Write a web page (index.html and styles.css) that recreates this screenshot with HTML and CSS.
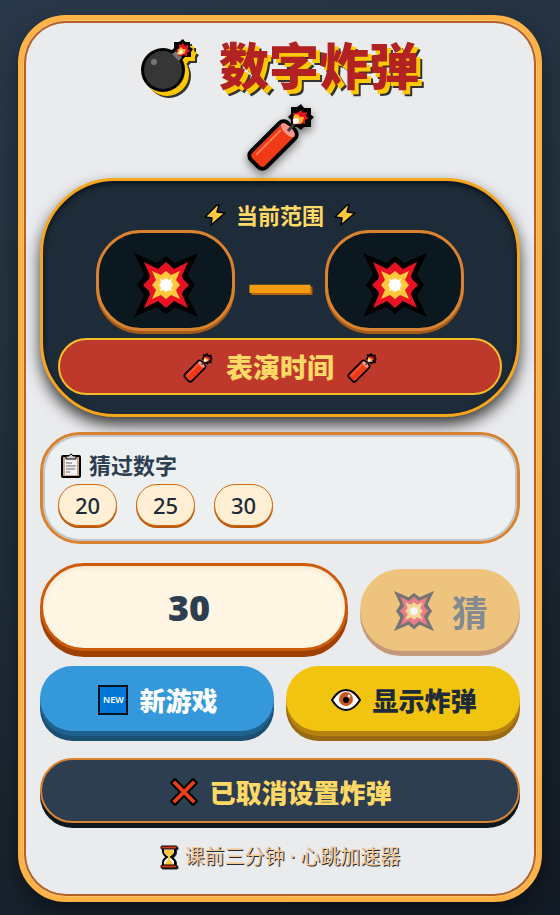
FILE: index.html
```html
<!DOCTYPE html>
<html lang="zh-CN">
<head>
    <meta charset="UTF-8">
    <meta name="viewport" content="width=device-width, initial-scale=1.0">
    <title>数字炸弹</title>
    <link rel="stylesheet" href="styles.css">
</head>
<body>
    <!-- shared icons -->
    <svg class="icon-defs" aria-hidden="true">
        <symbol id="icon-boom" viewBox="-32 -32 64 64">
            <path fill="#000" d="M-32-32L-9-22L0-29L9-22L32-32L22-11L24-7L29 0L24 7L22 11L32 32L9 22L0 29L-9 22L-32 32L-22 11L-24 7L-29 0L-24-7L-22-11Z"/>
            <path fill="#e81224" d="M-22-23L-8-16L0-23L8-16L22-23L16-9L17-6L23 0L17 6L16 9L22 23L8 16L0 23L-8 16L-22 23L-16 9L-17 6L-23 0L-17-6L-16-9Z"/>
            <path fill="#ffc83d" d="M-14-14L-5-10L0-14L5-10L14-14L10-5L14 0L10 5L14 14L5 10L0 14L-5 10L-14 14L-10 5L-14 0L-10-5Z"/>
            <path fill="#fff" d="M-6-6L-3-5L0-7L3-5L6-6L5-3L7 0L5 3L6 6L3 5L0 7L-3 5L-6 6L-5 3L-7 0L-5-3Z"/>
        </symbol>
        <symbol id="icon-dynamite" viewBox="0 0 68 68">
            <path d="M55 0l3 4h7v7l3 2l-3 3v7h-7l-3 3l-4-3h-6v-7l-3-3l3-3V3h6z"/>
            <g transform="rotate(-45 27 41)">
                <rect x="-1" y="28" width="56" height="26" rx="8"/>
                <rect x="3" y="32" width="48" height="18" rx="4" fill="#f03a17"/>
                <path d="M8 36H43" stroke="#ff7a55" stroke-width="2"/>
                <ellipse cx="48" cy="41" rx="4" ry="9" fill="#f7978b"/>
            </g>
            <path d="M42 27L50 18" stroke="#3b3b3b" stroke-width="3"/>
            <path fill="#e81224" d="M55 6l2 3l4-1l-1 4l3 2l-4 2v4l-4-1l-3 2l-2-4h-4l2-4l-1-4h4z"/>
            <path fill="#ffb02e" d="M52 10l2 3h4l-1 4l-2 3l-4-1l-4 1v-5l1-4z"/>
            <circle cx="50" cy="17" r="3" fill="#fff"/>
        </symbol>
        <symbol id="icon-bolt" viewBox="0 0 22 22">
            <path d="M13 1L1 13l7 1l-1 7L21 9l-8-1l2-7z" fill="#ffc83d" stroke="#000" stroke-width="1.5" stroke-linejoin="round"/>
        </symbol>
    </svg>

    <main class="card">
        <header class="header">
            <h1 class="title">
                <svg class="bomb" viewBox="0 0 52 54" aria-hidden="true">
                    <path d="M42 0l2 3h5v5l3 2l-2 3v5h-6l-3 3l-3-1l-8-8l3-3V3h5z"/>
                    <circle cx="22" cy="31" r="22"/>
                    <circle cx="22" cy="31" r="19" fill="#363636"/>
                    <circle cx="13" cy="23" r="3" fill="#767676"/>
                    <path d="M31 15l4-3l6 6l-3 4z" fill="#767676"/>
                    <path d="M42 4l2 3l3-1v4l2 2l-3 2v3l-4-1l-4 2l-1-5l-2-2l3-2V5l2 1z" fill="#e81224"/>
                    <path d="M40 8l2 2h3l-1 4l-4 2l-4-1l1-4z" fill="#ffb02e"/>
                    <path d="M37 15l3-5l2 4z" fill="#fff"/>
                </svg>
                <span>数字炸弹</span>
            </h1>
            <svg class="dynamite" aria-hidden="true"><use href="#icon-dynamite"/></svg>
        </header>

        <section class="range-panel">
            <h2 class="range-label">
                <svg class="icon-sm" aria-hidden="true"><use href="#icon-bolt"/></svg>
                <span>当前范围</span>
                <svg class="icon-sm" aria-hidden="true"><use href="#icon-bolt"/></svg>
            </h2>
            <div class="range">
                <div class="range-box"><svg class="boom" aria-hidden="true"><use href="#icon-boom"/></svg></div>
                <span class="dash">—</span>
                <div class="range-box"><svg class="boom" aria-hidden="true"><use href="#icon-boom"/></svg></div>
            </div>
            <div class="message">
                <svg class="icon-md" aria-hidden="true"><use href="#icon-dynamite"/></svg>
                <span>表演时间</span>
                <svg class="icon-md" aria-hidden="true"><use href="#icon-dynamite"/></svg>
            </div>
        </section>

        <section class="history">
            <h2 class="history-title">
                <svg class="clipboard" viewBox="0 0 22 25" aria-hidden="true">
                    <rect x="2" y="3" width="18" height="21" rx="1" fill="#c8a581" stroke="#000" stroke-width="2"/>
                    <rect x="5" y="5" width="12" height="17" fill="#f3f3f3"/>
                    <path d="M6 6V3h3q2-4 4 0h3v3z" fill="#d2d2d2" stroke="#000"/>
                    <path d="M6 10h6M6 13h10M6 16h9M6 19h4" stroke="#666"/>
                </svg>
                <span>猜过数字</span>
            </h2>
            <ul class="history-list">
                <li>20</li>
                <li>25</li>
                <li>30</li>
            </ul>
        </section>

        <form class="guess-row" id="guessForm">
            <input class="guess-input" id="guessInput" type="text" inputmode="numeric" value="30" aria-label="猜数字">
            <button class="guess-btn" type="submit" disabled>
                <svg class="icon-lg" aria-hidden="true"><use href="#icon-boom"/></svg>
                <span>猜</span>
            </button>
        </form>

        <div class="actions">
            <button class="btn btn-new" type="button">
                <span class="new-badge" aria-hidden="true">NEW</span>
                <span>新游戏</span>
            </button>
            <button class="btn btn-show" type="button">
                <svg class="eye" viewBox="0 0 30 22" aria-hidden="true">
                    <path d="M1 11Q7 1 15 1T29 11Q23 21 15 21T1 11z" fill="#fff" stroke="#000" stroke-width="2"/>
                    <circle cx="15" cy="10" r="7" fill="#c9561e"/>
                    <circle cx="15" cy="11" r="3" fill="#000"/>
                    <circle cx="18" cy="7" r="1.5" fill="#fff"/>
                </svg>
                <span>显示炸弹</span>
            </button>
        </div>

        <button class="btn btn-cancel" type="button">
            <svg class="cross" viewBox="0 0 28 28" aria-hidden="true">
                <path d="M5 1L14 10L23 1L27 5L18 14L27 23L23 27L14 18L5 27L1 23L10 14L1 5z" fill="#ec3f1f" stroke="#000" stroke-width="2" stroke-linejoin="round"/>
            </svg>
            <span>已取消设置炸弹</span>
        </button>

        <footer class="footer">
            <svg class="hourglass" viewBox="0 0 18 24" aria-hidden="true">
                <path d="M3 3V7Q3 9 7 12Q3 15 3 17V21H15V17Q15 15 11 12Q15 9 15 7V3z" fill="#fff" stroke="#000" stroke-width="2"/>
                <path d="M4 5H14Q14 9 10 11V15L14 20H4L8 15V11Q4 9 4 5z" fill="#ffc83d"/>
                <rect x="1" y="1" width="16" height="3" rx="1" fill="#d13b17" stroke="#000"/>
                <rect x="1" y="20" width="16" height="3" rx="1" fill="#d13b17" stroke="#000"/>
            </svg>
            <span>课前三分钟 · 心跳加速器</span>
        </footer>
    </main>

    <script>
        document.getElementById('guessForm').addEventListener('submit', (e) => {
            e.preventDefault();
        });
    </script>
</body>
</html>
```

FILE: styles.css
```css
* {
    margin: 0;
    padding: 0;
    box-sizing: border-box;
}

body {
    font-family: "Noto Sans", "Noto Sans CJK SC", sans-serif;
    background: linear-gradient(160deg, #293849 0%, #1f2d38 50%, #121a25 100%);
    min-height: 100vh;
    padding: 15px 18px 13px;
}

button,
input {
    font-family: inherit;
    border: none;
}

.icon-defs {
    position: absolute;
    width: 0;
    height: 0;
}

.card {
    max-width: 700px;
    margin: 0 auto;
    padding: 15px 17px 25px;
    background: #eaebed;
    border: 5px solid #ffb347;
    border-radius: 48px;
    box-shadow: 0 10px 20px rgba(0, 0, 0, 0.4), inset 0 0 0 1px #ffc568, inset 0 0 0 3px #b4622a;
}

/* header */
.header {
    display: flex;
    flex-direction: column;
    align-items: center;
    gap: 7px;
}

.title {
    display: flex;
    align-items: center;
    gap: 26px;
    font-size: 50px;
    line-height: 62px;
    font-weight: 900;
    color: #b22222;
    text-shadow: 4px 4px 0 #ffc800, 6px 6px 0 #333;
}

.bomb {
    width: 52px;
    height: 54px;
    filter: drop-shadow(4px 4px 0 #ffc800) drop-shadow(2px 2px 0 #333);
}

.dynamite {
    width: 68px;
    height: 68px;
    filter: drop-shadow(0 4px 4px rgba(0, 0, 0, 0.5));
}

/* range panel */
.range-panel {
    margin-top: 6px;
    padding: 19px 15px;
    background: #1e2b38;
    border: 3px solid #f5a61d;
    border-radius: 75px;
    box-shadow: 0 8px 15px rgba(0, 0, 0, 0.75), inset 0 3px 5px #0b151b;
}

.range-label {
    display: flex;
    justify-content: center;
    align-items: center;
    gap: 10px;
    font-size: 22px;
    line-height: 30px;
    color: #ffd966;
}

.icon-sm {
    width: 22px;
    height: 22px;
}

.range {
    display: flex;
    justify-content: center;
    align-items: center;
    gap: 12px;
}

.range-box {
    display: flex;
    justify-content: center;
    align-items: center;
    width: 139px;
    height: 101px;
    padding-top: 8px;
    background: #0c1820;
    border: 3px solid #d9822f;
    border-radius: 45px;
    box-shadow: 0 3px 0 #a45a18;
}

.boom {
    width: 64px;
    height: 64px;
}

.dash {
    font-size: 66px;
    line-height: 72px;
    font-weight: 800;
    color: #f39c12;
    text-shadow: 2px 2px 0 #b4610e;
}

.message {
    display: flex;
    justify-content: center;
    align-items: center;
    gap: 13px;
    margin-top: 7px;
    padding: 9px 8px 7px;
    background: #be382b;
    border: 2px solid #f5bd27;
    border-radius: 30px;
    font-size: 27px;
    line-height: 37px;
    font-weight: 800;
    color: #ffd966;
}

.icon-md {
    width: 30px;
    height: 30px;
}

/* history */
.history {
    margin-top: 15px;
    padding: 15px;
    background: #ecf0f1;
    border: 3px solid #d9822f;
    border-radius: 40px;
    box-shadow: inset 0 0 0 2px #c3c7c9;
}

.history-title {
    display: flex;
    align-items: center;
    gap: 7px;
    padding-left: 2px;
    font-size: 22px;
    line-height: 30px;
    color: #2c3e50;
}

.clipboard {
    width: 22px;
    height: 25px;
}

.history-list {
    display: flex;
    flex-wrap: wrap;
    gap: 19px;
    margin-top: 4px;
    list-style: none;
}

.history-list li {
    width: 59px;
    padding: 5px 0;
    background: #fff0d5;
    border: 1px solid #d9690f;
    border-radius: 24px;
    box-shadow: 0 2px 0 #b85a10;
    font-size: 22px;
    line-height: 30px;
    font-weight: 500;
    text-align: center;
    color: #1e2b38;
}

/* guess */
.guess-row {
    display: flex;
    align-items: flex-end;
    gap: 12px;
    margin-top: 19px;
}

.guess-input {
    flex: 1;
    min-width: 0;
    height: 88px;
    padding: 0 15px 0 5px;
    background: #fff6e3;
    border: 3px solid #cd5b0c;
    border-radius: 44px;
    box-shadow: 0 6px 0 #a04000, inset 0 2px 5px #f3e5cb;
    font-size: 36px;
    font-weight: 900;
    text-align: center;
    color: #2c3e50;
}

.guess-btn {
    display: flex;
    justify-content: center;
    align-items: center;
    gap: 18px;
    width: 160px;
    height: 82px;
    padding: 2px 0 0 2px;
    background: #f39c12;
    border-radius: 44px;
    box-shadow: 0 5px 0 #a04c10;
    font-size: 36px;
    font-weight: bold;
    color: #1e2b38;
    cursor: pointer;
}

.guess-btn:disabled {
    opacity: 0.5;
    cursor: not-allowed;
}

.icon-lg {
    width: 40px;
    height: 40px;
}

/* buttons */
.actions {
    display: grid;
    grid-template-columns: 1fr 1fr;
    gap: 12px;
    margin-top: 15px;
}

.btn {
    display: flex;
    justify-content: center;
    align-items: center;
    gap: 11px;
    height: 65px;
    padding: 2px 0 0 2px;
    border-radius: 36px;
    font-size: 26px;
    font-weight: 800;
    cursor: pointer;
}

.btn-new {
    background: #3498db;
    box-shadow: 0 5px 0 #1f618d, 0 10px 0 #1b4f72;
    color: #fff;
}

.btn-show {
    background: #f1c40f;
    box-shadow: 0 5px 0 #b7810f, 0 10px 0 #9a6a12;
    color: #1e2b38;
}

.btn-cancel {
    width: 100%;
    margin-top: 27px;
    background: #2c3e50;
    border: 2px solid #d9822f;
    box-shadow: 0 5px 0 #0b1820;
    color: #ffd966;
}

.new-badge {
    width: 30px;
    border: 2px solid #0a1220;
    background: #0078d7;
    font-size: 9px;
    line-height: 26px;
    font-weight: 600;
    color: #fff;
}

.eye {
    width: 30px;
    height: 22px;
}

.cross {
    width: 28px;
    height: 28px;
}

/* footer */
.footer {
    display: flex;
    justify-content: center;
    align-items: center;
    gap: 7px;
    margin-top: 19px;
    font-size: 20px;
    line-height: 30px;
    color: #f5c896;
    text-shadow: 1px 1px 0 #1e2b38;
}

.hourglass {
    width: 18px;
    height: 24px;
    filter: drop-shadow(1px 1px 0 #1e2b38);
}
```
